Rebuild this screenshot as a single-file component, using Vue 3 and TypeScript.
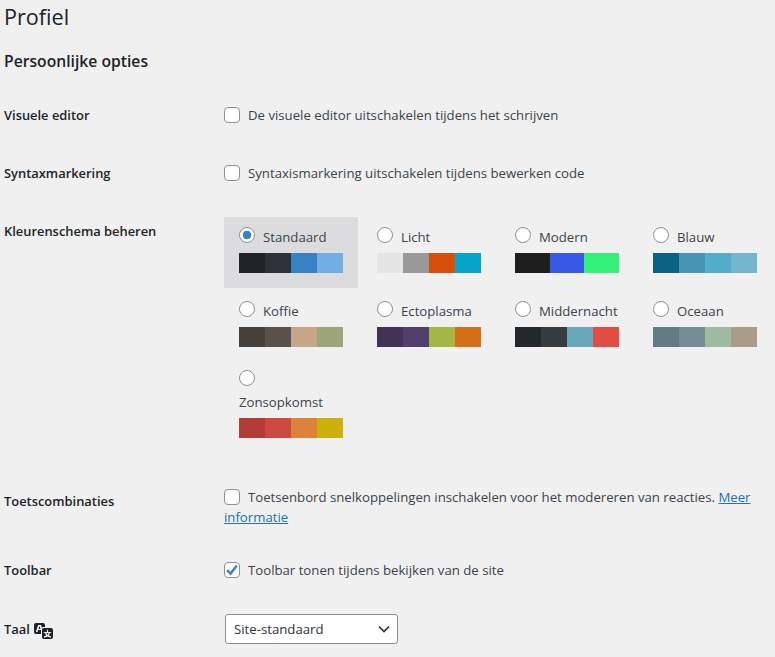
<script setup lang="ts">
interface Scheme {
  name: string
  colors: string[]
  selected?: boolean
  stacked?: boolean
}

const schemes: Scheme[] = [
  { name: 'Standaard', colors: ['#1d2327', '#2c3338', '#3582c4', '#72aee6'], selected: true },
  { name: 'Licht', colors: ['#e5e5e5', '#999999', '#d64e07', '#04a4cc'] },
  { name: 'Modern', colors: ['#1e1e1e', '#3858e9', '#33f078'] },
  { name: 'Blauw', colors: ['#096484', '#4796b3', '#52accc', '#74b6ce'] },
  { name: 'Koffie', colors: ['#46403c', '#59524c', '#c7a589', '#9ea476'] },
  { name: 'Ectoplasma', colors: ['#413256', '#523f6d', '#a3b745', '#d46f15'] },
  { name: 'Middernacht', colors: ['#25282b', '#363b3f', '#69a8bb', '#e14d43'] },
  { name: 'Oceaan', colors: ['#627c83', '#738e96', '#9ebaa0', '#aa9d88'] },
  { name: 'Zonsopkomst', colors: ['#b43c38', '#cf4944', '#dd823b', '#ccaf0b'], stacked: true }
]
</script>

<template>
  <main class="page">
    <h1 class="title">Profiel</h1>
    <h2 class="subtitle">Persoonlijke opties</h2>

    <section class="row">
      <div class="row-label">Visuele editor</div>
      <label class="row-field">
        <span class="box"></span>De visuele editor uitschakelen tijdens het schrijven
      </label>
    </section>

    <section class="row">
      <div class="row-label">Syntaxmarkering</div>
      <label class="row-field">
        <span class="box"></span>Syntaxismarkering uitschakelen tijdens bewerken code
      </label>
    </section>

    <section class="row">
      <div class="row-label">Kleurenschema beheren</div>
      <div class="row-field picker">
        <div
          v-for="s in schemes"
          :key="s.name"
          class="scheme"
          :class="{ selected: s.selected, stacked: s.stacked }"
        >
          <div class="scheme-head">
            <span class="radio"></span>
            <span class="scheme-name">{{ s.name }}</span>
          </div>
          <div class="swatches">
            <span
              v-for="c in s.colors"
              :key="c"
              class="swatch"
              :style="{ background: c }"
            ></span>
          </div>
        </div>
      </div>
    </section>

    <section class="row">
      <div class="row-label">Toetscombinaties</div>
      <div class="row-field shortcuts">
        <span class="box"></span>Toetsenbord snelkoppelingen inschakelen voor het modereren van reacties.
        <a class="link" href="#">Meer informatie</a>
      </div>
    </section>

    <section class="row">
      <div class="row-label toolbar-label">Toolbar</div>
      <label class="row-field toolbar">
        <span class="box">
          <svg class="tick" viewBox="0 0 16 16" width="16" height="16">
            <path d="M3.2 8.2 L6.6 11.6 L12.8 3.6" fill="none" stroke="#3582c4" stroke-width="2.4" />
          </svg>
        </span>Toolbar tonen tijdens bekijken van de site
      </label>
    </section>

    <section class="row">
      <div class="row-label lang">
        Taal
        <svg class="translate" viewBox="0 0 20 20" width="20" height="20">
          <path fill="#1d2327" d="M11 7H9.49c-.63 0-1.25.3-1.59.7L7 5H4.13l-2.39 7h1.69l.74-2H7v4H2c-1.1 0-2-.9-2-2V5c0-1.1.9-2 2-2h7c1.1 0 2 .9 2 2v2zM6.51 9H4.49l1-2.93zM10 8h7c1.1 0 2 .9 2 2v7c0 1.1-.9 2-2 2h-7c-1.1 0-2-.9-2-2v-7c0-1.1.9-2 2-2zm7.25 5v-1.08h-3.17V9.75h-1.16v2.17H9.75V13h1.28c.11.85.56 1.85 1.28 2.62-.87.36-1.89.62-2.31.62-.01.02.22.97.2 1.46.84 0 2.21-.5 3.28-1.15 1.09.65 2.48 1.15 3.34 1.15-.02-.49.2-1.44.2-1.46-.43 0-1.49-.27-2.38-.63.7-.77 1.14-1.77 1.25-2.61h1.31zm-3.81 1.93c-.5-.46-.85-1.13-1.01-1.93h2.09c-.17.8-.51 1.47-1 1.93l-.04.03s-.03-.02-.04-.03z" />
        </svg>
      </div>
      <div class="row-field lang-field">
        <div class="select">
          <span>Site-standaard</span>
          <svg viewBox="0 0 16 16" width="16" height="16">
            <path d="M3 5.5 L8 10.5 L13 5.5" fill="none" stroke="#2c3338" stroke-width="1.7" />
          </svg>
        </div>
      </div>
    </section>
  </main>
</template>

<style>
html,
body {
  margin: 0;
  background: #f0f0f1;
}
</style>

<style scoped>
.page {
  height: 657px;
  overflow: hidden;
  box-sizing: border-box;
  padding-left: 4px;
  font-family: "Open Sans", "Noto Sans", sans-serif;
  font-size: 13.2px;
  line-height: 20px;
  color: #3c434a;
  background: #f0f0f1;
}

.title {
  margin: 0;
  padding-top: 2px;
  height: 31px;
  font-size: 21.6px;
  line-height: 30px;
  font-weight: 400;
  color: #1d2327;
}

.subtitle {
  margin: 0;
  padding-top: 17px;
  height: 36px;
  font-size: 15.7px;
  line-height: 22px;
  font-weight: 600;
  color: #1d2327;
}

.row {
  display: grid;
  grid-template-columns: 220px 1fr;
}

.row-label {
  padding: 19px 0;
  font-size: 12.9px;
  font-weight: 600;
  color: #1d2327;
}

.row-field {
  display: block;
  padding: 19px 0;
}

.box {
  display: inline-block;
  position: relative;
  box-sizing: border-box;
  width: 16px;
  height: 16px;
  margin-right: 8px;
  vertical-align: -3px;
  background: #fff;
  border: 1px solid #8c8f94;
  border-radius: 4px;
}

.tick {
  position: absolute;
  left: -1px;
  top: -1px;
}

.picker {
  display: grid;
  grid-template-columns: repeat(4, 134px);
  column-gap: 4px;
  row-gap: 3px;
  padding: 15px 0 36px;
}

.scheme {
  box-sizing: border-box;
  height: 71px;
  padding: 5px 15px 15px;
}

.scheme.selected {
  background: #dcdcde;
}

.scheme-head {
  display: flex;
  flex-wrap: wrap;
  margin-bottom: 5px;
}

.radio {
  box-sizing: border-box;
  width: 16px;
  height: 16px;
  margin: 5px 8px 0 0;
  background: #fff;
  border: 1px solid #8c8f94;
  border-radius: 50%;
}

.selected .radio {
  background: radial-gradient(circle, #3582c4 0 4px, #fff 4.6px);
}

.scheme-name {
  margin-top: 4px;
  line-height: 22px;
  white-space: nowrap;
}

.stacked .radio {
  margin: 0 0 1px;
  flex-basis: 16px;
}

.stacked .scheme-name {
  flex-basis: 100%;
}

.swatches {
  display: flex;
  height: 20px;
}

.swatch {
  flex: 1;
}

.shortcuts {
  padding: 15px 0;
}

.link {
  color: #2271b1;
  text-decoration: underline;
}

.toolbar {
  padding: 18px 0 19px;
}

.toolbar-label {
  padding: 18px 0 19px;
}

.lang {
  display: flex;
  align-items: center;
  gap: 4px;
  height: 20px;
  padding: 20px 0 19px;
}

.translate {
  margin-top: 2px;
}

.lang-field {
  padding: 15px 0;
}

.select {
  display: flex;
  align-items: center;
  justify-content: space-between;
  box-sizing: border-box;
  width: 173px;
  height: 30px;
  margin-left: 1px;
  padding: 0 5px 0 8px;
  background: #fff;
  border: 1px solid #8c8f94;
  border-radius: 3px;
  color: #2c3338;
}
</style>
